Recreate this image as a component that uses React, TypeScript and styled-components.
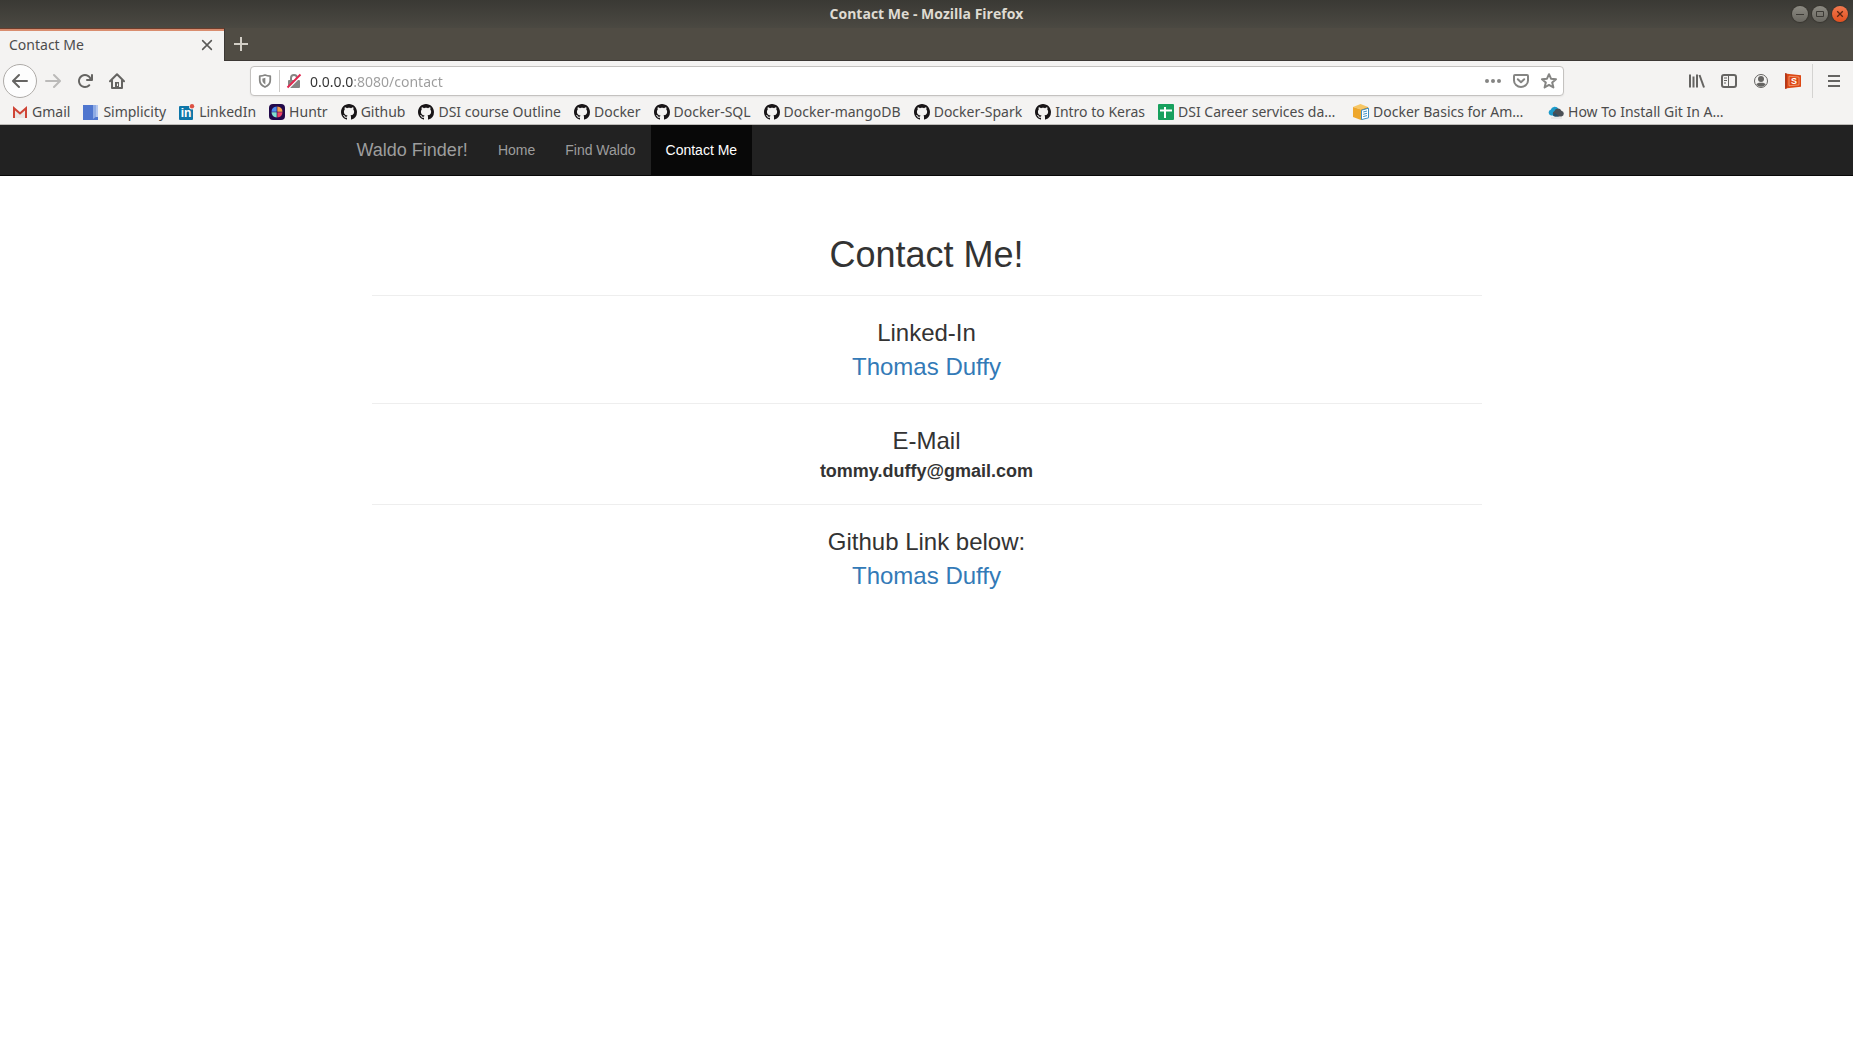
import React from "react";
import styled, { createGlobalStyle, css } from "styled-components";

const GlobalStyle = createGlobalStyle`
  *, *::before, *::after { box-sizing: border-box; }
  body {
    margin: 0;
    background: #fff;
    color: #333;
    font-family: "Liberation Sans", Arial, sans-serif;
  }
  button { font: inherit; color: inherit; }
  svg { display: block; flex: none; }
`;

const chromeFont = css`
  font-family: "Noto Sans", "Open Sans", sans-serif;
  font-size: 14px;
  line-height: 20px;
`;

/* ---------- window frame ---------- */

const Browser = styled.div`
  ${chromeFont}
  color: #4c4c4c;
`;

const TitleBar = styled.header`
  display: grid;
  grid-template-columns: 1fr auto 1fr;
  align-items: center;
  height: 28px;
  padding: 0 5px;
  background: linear-gradient(#3a3934, #4b4942);
`;

const WindowTitle = styled.div`
  grid-column: 2;
  font-family: "Open Sans", "Noto Sans", sans-serif;
  font-size: 14px;
  font-weight: 700;
  color: #dfdbd2;
`;

const WindowControls = styled.div`
  display: flex;
  justify-content: flex-end;
  gap: 4px;
`;

const WindowButton = styled.button<{ $close?: boolean }>`
  display: grid;
  place-items: center;
  width: 16px;
  height: 16px;
  padding: 0;
  border: 0;
  border-radius: 50%;
  background: ${(p) =>
    p.$close ? "linear-gradient(#f2794f, #e2501f)" : "linear-gradient(#8c8a82, #6a6861)"};
  box-shadow: 0 0 1px 1px #37352f;
`;

const TabStrip = styled.div`
  display: flex;
  height: 33px;
  background: #504c44;
  border-bottom: 1px solid #3c3835;
`;

const Tab = styled.div`
  display: flex;
  align-items: center;
  justify-content: space-between;
  width: 225px;
  height: 33px;
  padding: 0 6px 0 9px;
  background: #f4f3f2;
  border-top: 1px solid #6d3d2c;
  border-right: 1px solid #3c3835;
  box-shadow: inset 0 2px #d98d6f;
`;

const TabButton = styled.button<{ $light?: boolean }>`
  display: grid;
  place-items: center;
  width: 22px;
  height: 22px;
  padding: 0;
  border: 0;
  background: none;
  color: ${(p) => (p.$light ? "#d2cec6" : "#5a5a58")};
`;

const NewTab = styled.div`
  display: flex;
  align-items: center;
  padding: 0 5px;
`;

/* ---------- navigation toolbar ---------- */

const Toolbar = styled.div`
  display: flex;
  align-items: center;
  height: 40px;
  padding: 0 3px;
  background: #f4f3f2;
`;

const ToolButton = styled.button<{ $faded?: boolean }>`
  display: grid;
  place-items: center;
  flex: none;
  width: 32px;
  height: 32px;
  padding: 0;
  border: 0;
  background: none;
  color: ${(p) => (p.$faded ? "#bbbab9" : "#656462")};
`;

const BackButton = styled(ToolButton)`
  width: 34px;
  height: 34px;
  border: 1px solid #aeaba8;
  border-radius: 50%;
  background: #fdfdfd;
`;

const Spacer = styled.div`
  flex: 0 1 117px;
`;

const Divider = styled.div`
  width: 1px;
  height: 34px;
  margin: 0 5px 0 3px;
  background: #d4d3d1;
`;

const UrlBar = styled.form`
  display: flex;
  align-items: center;
  flex: 1;
  min-width: 0;
  height: 30px;
  background: #fff;
  border: 1px solid #c4c2c0;
  border-radius: 4px;
  box-shadow: 0 1px 2px rgba(0, 0, 0, 0.06);
`;

const UrlButton = styled(ToolButton)`
  width: 28px;
  height: 28px;
  color: #858583;
`;

const UrlDivider = styled.div`
  width: 1px;
  height: 22px;
  background: #cbcac8;
`;

const UrlInput = styled.input`
  flex: 1;
  min-width: 0;
  height: 28px;
  padding: 0 0 0 2px;
  border: 0;
  outline: 0;
  font: inherit;
  color: transparent;
  background: linear-gradient(90deg, #333 45px, #9c9c9c 45px);
  -webkit-background-clip: text;
  background-clip: text;
`;

/* ---------- bookmarks ---------- */

const BookmarkBar = styled.nav`
  display: flex;
  gap: 13px;
  height: 24px;
  padding: 0 12px 2px;
  overflow: hidden;
  background: #f4f3f2;
  border-bottom: 1px solid #bdbbb8;
`;

const Bookmark = styled.a`
  display: flex;
  align-items: center;
  flex: none;
  gap: 4px;
  color: #4c4c4c;
  text-decoration: none;
  white-space: nowrap;
`;

const BookmarkLabel = styled.span<{ $long?: boolean }>`
  min-width: ${(p) => (p.$long ? "162px" : "0")};
`;

/* ---------- web page ---------- */

const SiteNav = styled.nav`
  background: #222;
  border-bottom: 1px solid #080808;
`;

const SiteNavInner = styled.div`
  display: flex;
  max-width: 1170px;
  margin: 0 auto;
`;

const Brand = styled.a`
  padding: 15px;
  font-size: 18px;
  line-height: 20px;
  color: #9d9d9d;
  text-decoration: none;
`;

const NavLink = styled.a<{ $active?: boolean }>`
  padding: 15px;
  font-size: 14px;
  line-height: 20px;
  color: ${(p) => (p.$active ? "#fff" : "#9d9d9d")};
  background: ${(p) => (p.$active ? "#080808" : "transparent")};
  text-decoration: none;
`;

const Main = styled.main`
  max-width: 1170px;
  margin: 0 auto;
  padding: 59px 30px;
  text-align: center;
`;

const PageTitle = styled.h1`
  margin: 0 0 20px;
  font-size: 36px;
  font-weight: 400;
  line-height: 40px;
`;

const Section = styled.section`
  display: grid;
  gap: 4px;
  padding: 24px 0 19px;
  border-top: 1px solid #eee;
`;

const SectionTitle = styled.h2`
  margin: 0;
  font-size: 24px;
  font-weight: 400;
  line-height: 26px;
`;

const ProfileLink = styled.a`
  justify-self: center;
  font-size: 24px;
  line-height: 34px;
  color: #337ab7;
  text-decoration: none;
`;

const Email = styled.strong`
  font-size: 18px;
  line-height: 27px;
`;

/* ---------- icons ---------- */

type IconProps = { size?: number; children: React.ReactNode };

const Icon = ({ size = 16, children }: IconProps) => (
  <svg width={size} height={size} viewBox="0 0 16 16" fill="currentColor" aria-hidden="true">
    {children}
  </svg>
);

const BackIcon = () => (
  <Icon>
    <path d="M15 7H3.414l4.293-4.293a1 1 0 0 0-1.414-1.414l-6 6a1 1 0 0 0 0 1.414l6 6a1 1 0 0 0 1.414-1.414L3.414 9H15a1 1 0 0 0 0-2z" />
  </Icon>
);

const ForwardIcon = () => (
  <Icon>
    <path d="M1 9h11.586l-4.293 4.293a1 1 0 0 0 1.414 1.414l6-6a1 1 0 0 0 0-1.414l-6-6a1 1 0 0 0-1.414 1.414L12.586 7H1a1 1 0 0 0 0 2z" />
  </Icon>
);

const ReloadIcon = () => (
  <Icon>
    <path d="M15 1a1 1 0 0 0-1 1v2.418A6.995 6.995 0 1 0 8 15a6.954 6.954 0 0 0 4.95-2.05 1 1 0 0 0-1.414-1.414A5.019 5.019 0 1 1 12.549 6H10a1 1 0 0 0 0 2h5a1 1 0 0 0 1-1V2a1 1 0 0 0-1-1z" />
  </Icon>
);

const HomeIcon = () => (
  <Icon>
    <path
      d="M1 8.2 8 1.3l7 6.9M3 7.5V15h10V7.5"
      fill="none"
      stroke="currentColor"
      strokeWidth="2"
      strokeLinecap="round"
      strokeLinejoin="round"
    />
    <path d="M6 9h4v6H6z" />
    <path d="M8 10.5h1V13H8z" fill="#f4f3f2" />
  </Icon>
);

const ShieldIcon = () => (
  <Icon size={14}>
    <path
      d="M8 1.2c2 .9 4 1.2 6 1.2v4.8c0 3.6-2.4 6.2-6 7.7-3.6-1.5-6-4.1-6-7.7V2.4c2 0 4-.3 6-1.2z"
      fill="none"
      stroke="currentColor"
      strokeWidth="2"
      strokeLinejoin="round"
    />
    <path d="M8.4 4.3v7.7C6.2 10.7 5 9.3 5 7.2V5c1.2-.1 2.3-.3 3.4-.7z" />
  </Icon>
);

const InsecureLockIcon = () => (
  <Icon>
    <rect x="2" y="7" width="12" height="8" rx="1" />
    <path d="M5 7V5a3 3 0 0 1 6 0v2" fill="none" stroke="currentColor" strokeWidth="2" />
    <path d="M2.200 15.500 15.500 2.200" stroke="#fff" strokeWidth="2" />
    <path d="M1.500 14.500 14.500 1.500" stroke="#e22850" strokeWidth="2" />
  </Icon>
);

const MoreIcon = () => (
  <Icon>
    <circle cx="2" cy="8" r="2" />
    <circle cx="8" cy="8" r="2" />
    <circle cx="14" cy="8" r="2" />
  </Icon>
);

const PocketIcon = () => (
  <Icon>
    <path
      d="M2 2h12a1 1 0 0 1 1 1v4.5a7 6.5 0 0 1-14 0V3a1 1 0 0 1 1-1z"
      fill="none"
      stroke="currentColor"
      strokeWidth="2"
    />
    <path
      d="M4.8 6.2 8 9.2l3.2-3"
      fill="none"
      stroke="currentColor"
      strokeWidth="2"
      strokeLinecap="round"
      strokeLinejoin="round"
    />
  </Icon>
);

const StarIcon = () => (
  <Icon>
    <path
      d="m8 1.200 2 4.500 5 .5-3.800 3.300 1.200 5L8 11.900l-4.400 2.600 1.200-5L1 6.200l5-.5z"
      fill="none"
      stroke="currentColor"
      strokeWidth="2"
      strokeLinejoin="round"
    />
  </Icon>
);

const LibraryIcon = () => (
  <Icon>
    <path d="M1 1.5v13M4.5 3.5v11M8 1.5v13" stroke="currentColor" strokeWidth="2" />
    <path d="m10.500 2 4.500 12.500" stroke="currentColor" strokeWidth="2" />
  </Icon>
);

const SidebarIcon = () => (
  <Icon>
    <rect x="1" y="2" width="14" height="12" rx="2" fill="none" stroke="currentColor" strokeWidth="2" />
    <path d="M7.500 2v12M3 5h3M3 7.500h3M3 10h2" stroke="currentColor" strokeWidth="1" />
  </Icon>
);

const AccountIcon = () => (
  <Icon>
    <circle cx="8" cy="8" r="6.5" fill="none" stroke="currentColor" />
    <circle cx="8" cy="6" r="3" />
    <path d="M3.200 11.200c1.200-1 2.500-1.500 3.300-1.500h3c.8 0 2.100.5 3.300 1.500A5.800 5.800 0 0 1 8 13.800a5.800 5.800 0 0 1-4.800-2.600z" />
  </Icon>
);

const SlidesIcon = () => (
  <Icon>
    <path d="M0 0 2 .5v15L0 16z" fill="#b5391a" />
    <path d="m2 .8 14 1.4v11.6L2 15.200z" fill="#dd4814" />
    <path d="m4 3.200 10 .9v7.800l-10 .9z" fill="none" stroke="#f3a583" strokeWidth=".8" />
    <text x="9" y="11" fontSize="9" fontWeight="700" fontFamily="Liberation Sans" textAnchor="middle" fill="#fff">
      S
    </text>
  </Icon>
);

const MenuIcon = () => (
  <Icon>
    <path d="M2 3h12M2 8h12M2 13h12" stroke="currentColor" strokeWidth="2" />
  </Icon>
);

const CrossIcon = ({ size = 14 }: { size?: number }) => (
  <Icon size={size}>
    <path d="m3 3 10 10m0-10-10 10" stroke="currentColor" strokeWidth="1.8" strokeLinecap="round" />
  </Icon>
);

const PlusIcon = () => (
  <Icon>
    <path d="M8 1v14M1 8h14" stroke="currentColor" strokeWidth="2" />
  </Icon>
);

const GmailIcon = () => (
  <Icon>
    <path d="M1 3h14v11H1z" fill="#e9e6e4" />
    <path d="M2 3h12L8 8z" fill="#f7f5f4" />
    <path d="M2 14V4.200l6 5.300 6-5.300V14" fill="none" stroke="#cf4436" strokeWidth="2" />
  </Icon>
);

const SimplicityIcon = () => (
  <Icon>
    <path d="M0 1h15v15H0z" fill="#4f76cf" />
    <path d="M10 1h4v11l-4 3z" fill="#8fabe4" />
    <path d="M13 1h2v12h-2z" fill="#b4c7ef" />
  </Icon>
);

const LinkedInIcon = () => (
  <Icon>
    <rect x="0" y="2" width="14" height="14" rx="1" fill="#0e76a8" />
    <text x="7" y="13" fontSize="12" fontWeight="700" fontFamily="Liberation Sans" textAnchor="middle" fill="#fff">
      in
    </text>
    <circle cx="13" cy="2.5" r="3" fill="#f4f3f2" />
    <circle cx="13" cy="2.2" r="2.2" fill="#dd5143" />
  </Icon>
);

const HuntrIcon = () => (
  <Icon>
    <rect width="16" height="16" rx="4" fill="#22094b" />
    <path d="M7.700 7.700V2.500a5.500 5.500 0 0 0-5.200 5.200z" fill="#4f8df0" />
    <path d="M8.300 7.700V2.500a5.500 5.500 0 0 1 5.200 5.200z" fill="#f5a04b" />
    <path d="M7.700 8.300v5.200a5.500 5.500 0 0 1-5.200-5.200z" fill="#7fe0d0" />
    <path d="M8.300 8.300v5.200a5.500 5.500 0 0 0 5.200-5.200z" fill="#ee4266" />
  </Icon>
);

const GithubIcon = () => (
  <Icon>
    <path
      fill="#181517"
      d="M8 0C3.58 0 0 3.58 0 8c0 3.54 2.29 6.53 5.47 7.59.4.07.55-.17.55-.38 0-.19-.01-.82-.01-1.49-2.01.37-2.53-.49-2.69-.94-.09-.23-.48-.94-.82-1.13-.28-.15-.68-.52-.01-.53.63-.01 1.08.58 1.23.82.72 1.21 1.87.87 2.33.66.07-.52.28-.87.51-1.07-1.78-.2-3.64-.89-3.64-3.95 0-.87.31-1.59.82-2.15-.08-.2-.36-1.02.08-2.12 0 0 .67-.21 2.2.82.64-.18 1.32-.27 2-.27.68 0 1.36.09 2 .27 1.53-1.04 2.2-.82 2.2-.82.44 1.1.16 1.92.08 2.12.51.56.82 1.27.82 2.15 0 3.07-1.87 3.75-3.65 3.95.29.25.54.73.54 1.48 0 1.07-.01 1.93-.01 2.2 0 .21.15.46.55.38A8.012 8.012 0 0 0 16 8c0-4.42-3.58-8-8-8z"
    />
  </Icon>
);

const SheetsIcon = () => (
  <Icon>
    <rect width="16" height="16" rx="1" fill="#17a05d" />
    <path d="M7 3v11M2 6.500h12" stroke="#fff" strokeWidth="2" />
  </Icon>
);

const AwsIcon = () => (
  <Icon>
    <path d="M0 3 7.500 0 15 3 8 5.500z" fill="#f7c765" />
    <path d="M0 3l8 2.500V16l-8-3z" fill="#eea72c" />
    <path d="m8 5.500 7-2.500v10l-7 3z" fill="#d98f1b" />
    <path d="m8.500 6.200 7-2v9.600l-7 1.800z" fill="#fff" stroke="#3b8fc4" />
    <path d="m10.200 8 3.800-1m-3.800 3.300 3.800-1m-3.800 3.300 3.800-1" stroke="#3b8fc4" />
  </Icon>
);

const CloudIcon = () => (
  <Icon>
    <path d="M3 11.500a3 3 0 0 1-.3-5.800A4.200 4.200 0 0 1 10.500 5v6.500z" fill="#1d9bcb" />
    <path d="M7 12.500a3 3 0 0 1-.5-5.600 3.700 3.700 0 0 1 6.900-.1 2.900 2.900 0 0 1 .1 5.700z" fill="#4a4f55" />
    <path d="m7 9 4 3.500H7a3 3 0 0 1-2-1z" fill="#24506b" />
    <path d="M3 14h11" stroke="#d9d8d7" />
  </Icon>
);

/* ---------- content ---------- */

type BookmarkItem = { label: string; icon: React.ComponentType; long?: boolean };

const bookmarks: BookmarkItem[] = [
  { label: "Gmail", icon: GmailIcon },
  { label: "Simplicity", icon: SimplicityIcon },
  { label: "LinkedIn", icon: LinkedInIcon },
  { label: "Huntr", icon: HuntrIcon },
  { label: "Github", icon: GithubIcon },
  { label: "DSI course Outline", icon: GithubIcon },
  { label: "Docker", icon: GithubIcon },
  { label: "Docker-SQL", icon: GithubIcon },
  { label: "Docker-mangoDB", icon: GithubIcon },
  { label: "Docker-Spark", icon: GithubIcon },
  { label: "Intro to Keras", icon: GithubIcon },
  { label: "DSI Career services da…", icon: SheetsIcon, long: true },
  { label: "Docker Basics for Am…", icon: AwsIcon, long: true },
  { label: "How To Install Git In A…", icon: CloudIcon, long: true },
];

const pages = ["Home", "Find Waldo", "Contact Me"];

export default function App() {
  return (
    <>
      <GlobalStyle />
      <Browser>
        <TitleBar>
          <WindowTitle>Contact Me - Mozilla Firefox</WindowTitle>
          <WindowControls>
            <WindowButton aria-label="Minimize">
              <svg width="10" height="10" viewBox="0 0 10 10">
                <path d="M1 5.5h8" stroke="#3c3a35" />
              </svg>
            </WindowButton>
            <WindowButton aria-label="Maximize">
              <svg width="10" height="10" viewBox="0 0 10 10">
                <path d="M1.5 2.5h7v5h-7z" fill="none" stroke="#3c3a35" />
              </svg>
            </WindowButton>
            <WindowButton $close aria-label="Close window">
              <svg width="10" height="10" viewBox="0 0 10 10">
                <path d="m2.200 2.200 5.600 5.600m0-5.600-5.600 5.600" stroke="#5a2512" strokeWidth="1.3" />
              </svg>
            </WindowButton>
          </WindowControls>
        </TitleBar>

        <TabStrip>
          <Tab>
            <span>Contact Me</span>
            <TabButton aria-label="Close tab">
              <CrossIcon />
            </TabButton>
          </Tab>
          <NewTab>
            <TabButton $light aria-label="New tab">
              <PlusIcon />
            </TabButton>
          </NewTab>
        </TabStrip>

        <Toolbar>
          <BackButton aria-label="Back">
            <BackIcon />
          </BackButton>
          <ToolButton $faded aria-label="Forward">
            <ForwardIcon />
          </ToolButton>
          <ToolButton aria-label="Reload">
            <ReloadIcon />
          </ToolButton>
          <ToolButton aria-label="Home page">
            <HomeIcon />
          </ToolButton>
          <Spacer />
          <UrlBar onSubmit={(e) => e.preventDefault()}>
            <UrlButton type="button" aria-label="Tracking protection">
              <ShieldIcon />
            </UrlButton>
            <UrlDivider />
            <UrlButton type="button" aria-label="Connection is not secure">
              <InsecureLockIcon />
            </UrlButton>
            <UrlInput aria-label="Address" defaultValue="0.0.0.0:8080/contact" spellCheck={false} />
            <UrlButton type="button" aria-label="Page actions">
              <MoreIcon />
            </UrlButton>
            <UrlButton type="button" aria-label="Save to Pocket">
              <PocketIcon />
            </UrlButton>
            <UrlButton type="button" aria-label="Bookmark this page">
              <StarIcon />
            </UrlButton>
          </UrlBar>
          <Spacer />
          <ToolButton aria-label="Library">
            <LibraryIcon />
          </ToolButton>
          <ToolButton aria-label="Sidebars">
            <SidebarIcon />
          </ToolButton>
          <ToolButton aria-label="Account">
            <AccountIcon />
          </ToolButton>
          <ToolButton aria-label="Slides extension">
            <SlidesIcon />
          </ToolButton>
          <Divider />
          <ToolButton aria-label="Open menu">
            <MenuIcon />
          </ToolButton>
        </Toolbar>

        <BookmarkBar aria-label="Bookmarks">
          {bookmarks.map(({ label, icon: Glyph, long }) => (
            <Bookmark key={label} href="#">
              <Glyph />
              <BookmarkLabel $long={long}>{label}</BookmarkLabel>
            </Bookmark>
          ))}
        </BookmarkBar>
      </Browser>

      <SiteNav aria-label="Site">
        <SiteNavInner>
          <Brand href="#">Waldo Finder!</Brand>
          {pages.map((page) => (
            <NavLink key={page} href="#" $active={page === "Contact Me"}>
              {page}
            </NavLink>
          ))}
        </SiteNavInner>
      </SiteNav>

      <Main>
        <PageTitle>Contact Me!</PageTitle>
        <Section>
          <SectionTitle>Linked-In</SectionTitle>
          <ProfileLink href="#">Thomas Duffy</ProfileLink>
        </Section>
        <Section>
          <SectionTitle>E-Mail</SectionTitle>
          <Email>tommy.duffy@gmail.com</Email>
        </Section>
        <Section>
          <SectionTitle>Github Link below:</SectionTitle>
          <ProfileLink href="#">Thomas Duffy</ProfileLink>
        </Section>
      </Main>
    </>
  );
}
